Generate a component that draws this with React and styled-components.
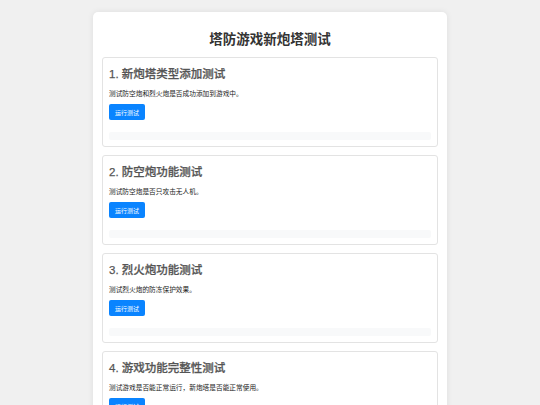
import styled, { createGlobalStyle } from "styled-components"

const GlobalStyle = createGlobalStyle`
  html, body {
    margin: 0;
    padding: 0;
    background: #f0f0f0;
  }
  body {
    font-family: "Liberation Sans", "Noto Sans CJK SC", sans-serif;
    color: #333;
  }
`

const Page = styled.div`
  padding-top: 12px;
`

const Card = styled.div`
  width: 354px;
  margin: 0 auto;
  box-sizing: border-box;
  background: #fff;
  border-radius: 5px;
  box-shadow: 0 0 6px rgba(0, 0, 0, 0.08);
  padding: 9px 9px 12px;
`

const Title = styled.h1`
  margin: 11px 0 9px;
  font-size: 13.5px;
  line-height: 16px;
  font-weight: bold;
  text-align: center;
  color: #333;
`

const Section = styled.div`
  border: 1px solid #e3e3e3;
  border-radius: 3px;
  padding: 6px;
  margin-bottom: 8px;
`

const SectionTitle = styled.h2`
  margin: 3px 0 0;
  font-size: 11.5px;
  line-height: 14px;
  font-weight: 500;
  color: #555;
  -webkit-text-stroke: 0.25px #555;
`

const Desc = styled.p`
  margin: 8px 0 0;
  font-size: 6.7px;
  line-height: 10px;
  color: #222;
`

const RunButton = styled.button`
  display: block;
  margin-top: 5px;
  width: 36px;
  height: 16px;
  padding: 0;
  border: none;
  border-radius: 2px;
  background: #0a84ff;
  color: #fff;
  font-family: inherit;
  font-size: 6px;
  cursor: pointer;
`

const Result = styled.div`
  margin-top: 12px;
  height: 8px;
  background: #f8f9fa;
  border-radius: 2px;
`

const tests = [
  { title: "1. 新炮塔类型添加测试", desc: "测试防空炮和烈火炮是否成功添加到游戏中。" },
  { title: "2. 防空炮功能测试", desc: "测试防空炮是否只攻击无人机。" },
  { title: "3. 烈火炮功能测试", desc: "测试烈火炮的防冻保护效果。" },
  { title: "4. 游戏功能完整性测试", desc: "测试游戏是否能正常运行，新炮塔是否能正常使用。" },
]

const App = () => {
  return (
    <Page>
      <GlobalStyle />
      <Card>
        <Title>塔防游戏新炮塔测试</Title>
        {tests.map((t) => (
          <Section key={t.title}>
            <SectionTitle>{t.title}</SectionTitle>
            <Desc>{t.desc}</Desc>
            <RunButton>运行测试</RunButton>
            <Result />
          </Section>
        ))}
      </Card>
    </Page>
  )
}

export default App
